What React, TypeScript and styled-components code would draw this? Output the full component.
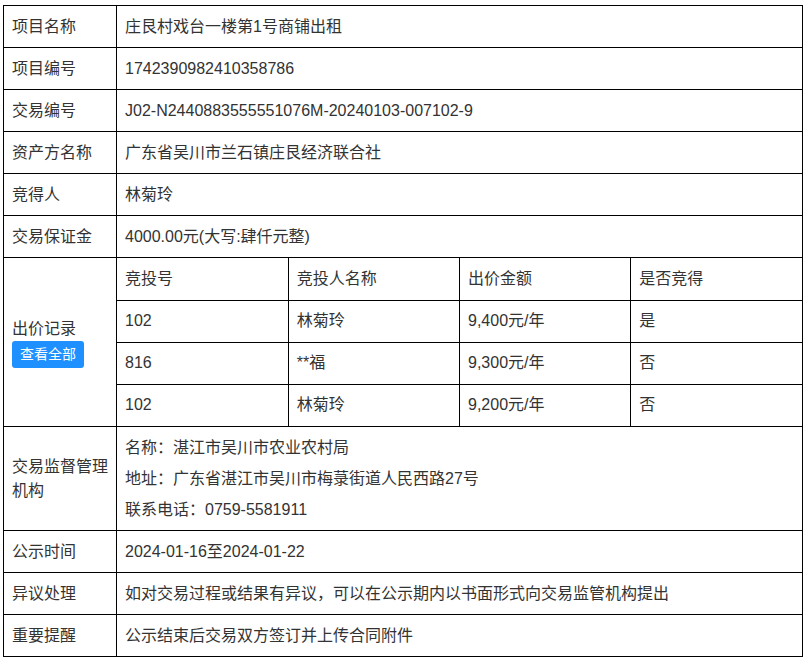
import React from "react";
import styled, { createGlobalStyle } from "styled-components";

const Global = createGlobalStyle`
  html, body { margin: 0; padding: 0; background: #fff; }
  body { font-family: "Liberation Sans", "Noto Sans CJK SC", sans-serif; color: #333; }
`;

const Wrap = styled.div`
  padding: 5px 3px;
`;

const Table = styled.table`
  width: 800px;
  border-collapse: collapse;
  table-layout: fixed;
  font-size: 16px;
  line-height: 24px;
  color: #333;
`;

const Label = styled.td`
  width: 96px;
  height: 42px;
  padding: 0 8px;
  border: 1px solid #000;
  vertical-align: middle;
  box-sizing: border-box;
`;

const Value = styled.td<{ $flush?: boolean }>`
  padding: ${(p) => (p.$flush ? "0" : "0 8px")};
  border: 1px solid #000;
  vertical-align: middle;
`;

const InnerTable = styled.table`
  width: 100%;
  border-collapse: collapse;
  table-layout: fixed;
  border-style: hidden;
`;

const InnerCell = styled.td`
  height: 42px;
  padding: 0 8px;
  border: 1px solid #000;
  vertical-align: middle;
  box-sizing: border-box;
`;

const Lines = styled.div`
  padding: 5px 0;
  line-height: 31px;
`;

const ViewAll = styled.button`
  display: inline-block;
  margin-top: 0;
  padding: 0 8px;
  height: 27px;
  border: none;
  border-radius: 3px;
  background: #1e90ff;
  color: #fff;
  font-family: inherit;
  font-size: 14px;
  line-height: 27px;
  cursor: pointer;
`;

const LabelBlock = styled.div`
  display: flex;
  flex-direction: column;
  align-items: flex-start;
`;

const simpleRows: [string, string][] = [
  ["项目名称", "庄艮村戏台一楼第1号商铺出租"],
  ["项目编号", "1742390982410358786"],
  ["交易编号", "J02-N2440883555551076M-20240103-007102-9"],
  ["资产方名称", "广东省吴川市兰石镇庄艮经济联合社"],
  ["竞得人", "林菊玲"],
  ["交易保证金", "4000.00元(大写:肆仟元整)"],
];

const bids = [
  ["竞投号", "竞投人名称", "出价金额", "是否竞得"],
  ["102", "林菊玲", "9,400元/年", "是"],
  ["816", "**福", "9,300元/年", "否"],
  ["102", "林菊玲", "9,200元/年", "否"],
];

const tailRows: [string, string][] = [
  ["公示时间", "2024-01-16至2024-01-22"],
  ["异议处理", "如对交易过程或结果有异议，可以在公示期内以书面形式向交易监管机构提出"],
  ["重要提醒", "公示结束后交易双方签订并上传合同附件"],
];

export default function App() {
  return (
    <Wrap>
      <Global />
      <Table>
        <colgroup>
          <col style={{ width: 113 }} />
          <col />
        </colgroup>
        <tbody>
          {simpleRows.map(([k, v]) => (
            <tr key={k}>
              <Label>{k}</Label>
              <Value>{v}</Value>
            </tr>
          ))}
          <tr>
            <Label>
              <LabelBlock>
                <span>出价记录</span>
                <ViewAll>查看全部</ViewAll>
              </LabelBlock>
            </Label>
            <Value $flush>
              <InnerTable>
                <tbody>
                  {bids.map((r, i) => (
                    <tr key={i}>
                      {r.map((c, j) => (
                        <InnerCell key={j}>{c}</InnerCell>
                      ))}
                    </tr>
                  ))}
                </tbody>
              </InnerTable>
            </Value>
          </tr>
          <tr>
            <Label>交易监督管理机构</Label>
            <Value>
              <Lines>
                <div>名称：湛江市吴川市农业农村局</div>
                <div>地址：广东省湛江市吴川市梅菉街道人民西路27号</div>
                <div>联系电话：0759-5581911</div>
              </Lines>
            </Value>
          </tr>
          {tailRows.map(([k, v]) => (
            <tr key={k}>
              <Label>{k}</Label>
              <Value>{v}</Value>
            </tr>
          ))}
        </tbody>
      </Table>
    </Wrap>
  );
}
